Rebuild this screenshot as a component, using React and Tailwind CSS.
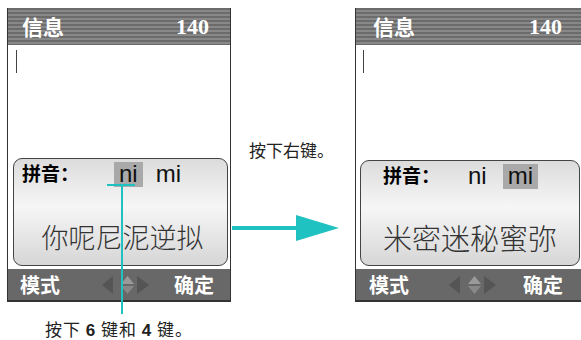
const cjk = "font-['Noto_Sans_CJK_SC','Noto_Sans_CJK_JP',sans-serif]";

function NavIcon({ className }) {
  return (
    <svg width="48" height="20" viewBox="0 0 48 20" className={className}>
      <polygon points="0,10 11,1 11,19" fill="#555555" />
      <polygon points="19,9 25.5,1 32,9" fill="#9a9a9a" />
      <polygon points="19,11 25.5,19 32,11" fill="#888888" />
      <polygon points="35,1 47,10 35,19" fill="#555555" />
    </svg>
  );
}

function Phone({ v }) {
  return (
    <div className={`flex ${v.w} h-[294px] shrink-0 flex-col border-x border-b-2 border-[#333]`}>
      {/* title bar */}
      <div className={`flex h-[37px] items-center justify-between bg-[repeating-linear-gradient(to_bottom,#6b6b6b_0px,#6b6b6b_2px,#888888_2px,#888888_4px)] ${v.headPad} text-white`}>
        <span className={`${cjk} text-[21px] font-bold leading-none`}>信息</span>
        <span className="font-['Liberation_Serif',serif] text-[22px] font-bold leading-none">140</span>
      </div>
      {/* text area */}
      <div className="flex flex-1 flex-col bg-white">
        <div className={`mt-[5px] ${v.cursor} h-[23px] w-px bg-[#444]`} />
        <div className={`mt-auto ${v.popM} flex ${v.popH} flex-col rounded-[9px] border border-[#444] bg-[linear-gradient(to_bottom,#dcdcdc,#f6f6f6_45%,#d6d6d6)]`}>
          <div className={`flex items-start ${v.rowPad} pt-[3px]`}>
            <span className={`${cjk} mt-[1px] text-[19px] font-bold leading-none text-black`}>拼音：</span>
            <span className="flex items-center font-['Liberation_Sans',sans-serif] text-[24px] leading-none text-[#111]">
              <span className={`${v.niM} px-[5px] pb-[1px] ${v.hl === "ni" ? "bg-[#a9a9a9]" : ""}`}>ni</span>
              <span className={`${v.miM} px-[5px] pb-[1px] ${v.hl === "mi" ? "bg-[#a9a9a9]" : ""}`}>mi</span>
            </span>
          </div>
          <div className={`mt-auto ${v.candPad} text-center ${cjk} ${v.candSize} font-light leading-none text-[#333]`}>
            {v.cands}
          </div>
        </div>
        {/* soft keys */}
        <div className={`mt-[3px] flex h-[31px] items-center bg-[#686868] ${v.softPad} text-white`}>
          <span className={`${cjk} text-[20px] font-bold leading-none`}>模式</span>
          <NavIcon className={v.navM} />
          <span className={`ml-auto ${cjk} text-[20px] font-bold leading-none`}>确定</span>
        </div>
      </div>
    </div>
  );
}

const left = {
  w: "w-[224px]",
  headPad: "pl-[14px] pr-[21px]",
  cursor: "ml-[8px]",
  popM: "ml-[5px] mr-[2px]",
  popH: "h-[108px]",
  rowPad: "pl-[8px]",
  niM: "ml-[35px]",
  miM: "ml-[8px]",
  hl: "ni",
  candPad: "pb-[15px] pl-[4px]",
  candSize: "text-[27px]",
  cands: "你呢尼泥逆拟",
  softPad: "pl-[12px] pr-[16px]",
  navM: "ml-[42px]",
};

const right = {
  w: "w-[228px]",
  headPad: "pl-[17px] pr-[20px]",
  cursor: "ml-[7px]",
  popM: "ml-[4px] mr-[2px]",
  popH: "h-[106px]",
  rowPad: "pl-[22px]",
  niM: "ml-[23px]",
  miM: "ml-[11px]",
  hl: "mi",
  candPad: "pb-[13px]",
  candSize: "text-[29px]",
  cands: "米密迷秘蜜弥",
  softPad: "pl-[13px] pr-[19px]",
  navM: "ml-[40px]",
};

export default function App() {
  return (
    <div className="relative h-[340px] w-[581px] overflow-hidden bg-white">
      <div className="flex pl-[7px] pt-[8px]">
        <div className="flex flex-col items-center">
          <Phone v={left} />
          <p className={`mt-[17px] ${cjk} text-[17px] leading-[19px] tracking-[1px] text-[#222]`}>
            按下 <b className="font-['Liberation_Sans',sans-serif] font-bold">6</b> 键和 <b className="font-['Liberation_Sans',sans-serif] font-bold">4</b> 键。
          </p>
        </div>
        <div className="flex w-[124px] shrink-0 flex-col">
          <p className={`mt-[133px] pl-[18px] ${cjk} text-[17px] leading-none text-[#222]`}>按下右键。</p>
          <svg width="108" height="27" viewBox="0 0 108 27" className="mt-[56px] ml-px">
            <rect x="0" y="12" width="66" height="4" fill="#1fc1c1" />
            <polygon points="64,1 107,14 64,27" fill="#1fc1c1" />
          </svg>
        </div>
        <Phone v={right} />
      </div>
      {/* callout line */}
      <div className="absolute left-[107px] top-[184px] h-[2px] w-[28px] bg-[#1fc1c1]" />
      <div className="absolute left-[121px] top-[185px] h-[129px] w-[2px] bg-[#1fc1c1]" />
    </div>
  );
}
